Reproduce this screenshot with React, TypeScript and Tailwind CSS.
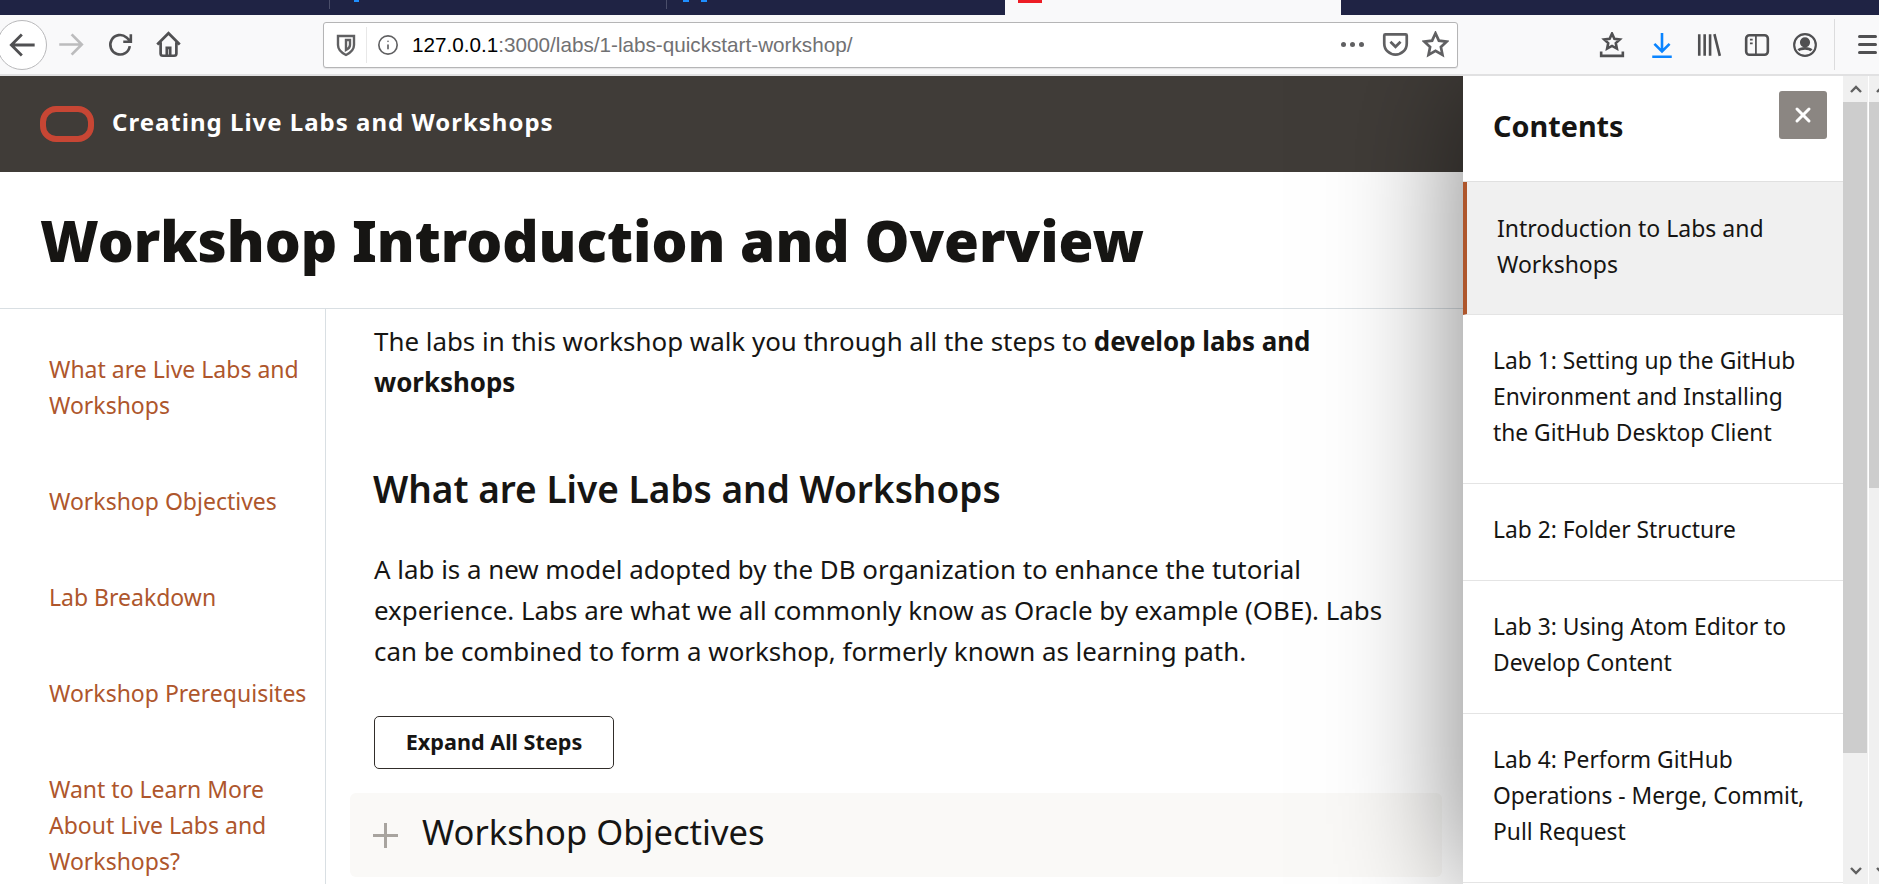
import { Info, X } from "lucide-react";

const sans = "font-['Noto_Sans','Open_Sans',sans-serif]";

const sections = [
  ["What are Live Labs and", "Workshops"],
  ["Workshop Objectives"],
  ["Lab Breakdown"],
  ["Workshop Prerequisites"],
  ["Want to Learn More", "About Live Labs and", "Workshops?"],
];

const labs = [
  { lines: ["Lab 1: Setting up the GitHub", "Environment and Installing", "the GitHub Desktop Client"] },
  { lines: ["Lab 2: Folder Structure"] },
  { lines: ["Lab 3: Using Atom Editor to", "Develop Content"] },
  { lines: ["Lab 4: Perform GitHub", "Operations - Merge, Commit,", "Pull Request"] },
];

function TabStrip() {
  return (
    <div className="flex h-[15px] shrink-0 bg-[#1f2344]">
      <div className="w-[329px] shrink-0" />
      <div className="flex h-[9px] w-[337px] shrink-0 border-l border-[#4a4e6a] pl-6">
        <div className="h-[2px] w-[5px] bg-[#1f8fff]" />
      </div>
      <div className="flex h-[9px] w-[339px] shrink-0 gap-3 border-l border-[#4a4e6a] pl-4">
        <div className="h-[2px] w-[6px] bg-[#1f8fff]" />
        <div className="h-[2px] w-[6px] bg-[#1f8fff]" />
      </div>
      <div className="w-[336px] shrink-0 bg-[#f9f9fa] pl-[13px]">
        <div className="h-[3px] w-[24px] bg-[#ed1c24]" />
      </div>
    </div>
  );
}

function ToolIcon({ className, children }: { className?: string; children: React.ReactNode }) {
  return (
    <svg viewBox="0 0 24 24" fill="none" stroke="currentColor" strokeWidth={2.4} className={className}>
      {children}
    </svg>
  );
}

function Toolbar() {
  return (
    <div className="flex h-[61px] shrink-0 items-center border-b-2 border-[#e1e1e2] bg-[#f9f9fa] text-[#505052]">
      <div className="ml-[-3px] flex h-[50px] w-[50px] shrink-0 items-center justify-center rounded-full border border-[#b9b9bb] bg-white">
        <ToolIcon className="ml-[2px] h-[28px] w-[28px]">
          <path d="M22 12H3M11 3l-9 9 9 9" />
        </ToolIcon>
      </div>
      <ToolIcon className="ml-[10px] h-[27px] w-[27px] text-[#bcbcbd]">
        <path d="M2 12h19M13 3l9 9-9 9" />
      </ToolIcon>
      <ToolIcon className="ml-[23px] h-[26px] w-[26px]">
        <path d="M21 13a9 9 0 1 1-3-8l3 3M22 2v7h-7" />
      </ToolIcon>
      <ToolIcon className="ml-[22px] h-[27px] w-[27px]">
        <path d="M2 12 12 2l10 10M5 10v10a2 2 0 0 0 2 2h10a2 2 0 0 0 2-2V10M10.500 22v-7h3v7" />
      </ToolIcon>

      <div className="ml-[141px] flex h-[46px] w-[1135px] shrink-0 items-center rounded-[3px] border border-[#b5b5b6] bg-white shadow-[0_1px_1px_rgba(0,0,0,0.08)]">
        <ToolIcon className="ml-[10px] h-[24px] w-[24px] text-[#606062]">
          <path d="M4 3h16v9c0 5-4 8-8 10-4-2-8-5-8-10zM12 7h4v5c0 2-2 4-4 5z" />
        </ToolIcon>
        <div className="ml-[8px] h-[36px] w-px bg-[#e8e8e8]" />
        <Info className="ml-[10px] h-[22px] w-[22px] text-[#606062]" strokeWidth={1.8} />
        <div className="ml-[13px] font-['Liberation_Sans',sans-serif] text-[20.700px] text-[#717173]">
          <span className="text-black">127.0.0.1</span>:3000/labs/1-labs-quickstart-workshop/
        </div>
        <div className="ml-auto flex items-center gap-[4px]">
          <span className="h-[5px] w-[5px] rounded-full bg-[#606062]" />
          <span className="h-[5px] w-[5px] rounded-full bg-[#606062]" />
          <span className="h-[5px] w-[5px] rounded-full bg-[#606062]" />
        </div>
        <ToolIcon className="ml-[18px] h-[27px] w-[27px] text-[#606062]">
          <path d="M3 3h18a1 1 0 0 1 1 1v7c0 6-5 10-10 10S2 17 2 11V4a1 1 0 0 1 1-1zM7.500 9.500 12 14l4.500-4.500" />
        </ToolIcon>
        <ToolIcon className="ml-[13px] mr-[8px] h-[27px] w-[27px] text-[#606062]">
          <path d="m12 2 3 6.600 7 .8-5.200 4.800 1.400 7L12 17.600l-6.200 3.600 1.400-7L2 9.400l7-.8z" />
        </ToolIcon>
      </div>

      <ToolIcon className="ml-[141px] h-[26px] w-[26px]">
        <path d="m12 1.500 2.200 4.800 5 .6-3.700 3.400 1 5L12 12.800l-4.500 2.500 1-5L4.800 6.900l5-.6zM2 18v4h20v-4" />
      </ToolIcon>
      <ToolIcon className="ml-[24px] h-[26px] w-[26px] text-[#0a84ff]">
        <path d="M12 1v17M5 11l7 7 7-7M3 23h18" />
      </ToolIcon>
      <ToolIcon className="ml-[21px] h-[26px] w-[26px]">
        <path d="M3 2v20M8 2v20M13 2v20M17 2l5 20" />
      </ToolIcon>
      <ToolIcon className="ml-[22px] h-[26px] w-[26px]">
        <rect x="2" y="3" width="20" height="18" rx="3" />
        <path d="M11 3v18M5.500 7H8M5.500 10.500H8" strokeWidth={1.6} />
      </ToolIcon>
      <ToolIcon className="ml-[22px] h-[26px] w-[26px]">
        <circle cx="12" cy="12" r="10" strokeWidth={2} />
        <circle cx="12" cy="9.500" r="3.500" fill="currentColor" />
        <path d="M6 17c2-2.500 10-2.500 12 0" strokeWidth={2.6} />
      </ToolIcon>
      <div className="ml-[16px] h-[51px] w-px bg-[#dcdcdd]" />
      <div className="ml-[23px] flex w-[19px] flex-col gap-[5px]">
        <span className="h-[3px] rounded-full bg-[#505052]" />
        <span className="h-[3px] rounded-full bg-[#505052]" />
        <span className="h-[3px] rounded-full bg-[#505052]" />
      </div>
    </div>
  );
}

function Page() {
  return (
    <div className={`h-full w-full overflow-hidden ${sans} text-[#161513]`}>
      <header className="flex h-[96px] items-center bg-[#403c38] pl-[40px]">
        <div className="h-[36px] w-[54px] rounded-[16px] border-[6px] border-[#c74634]" />
        <div className="mb-[4px] ml-[18px] text-[24px] font-bold tracking-[1px] text-white">
          Creating Live Labs and Workshops
        </div>
      </header>
      <div className="flex h-[137px] items-center border-b border-[#d9dfe3] pl-[40px]">
        <h1 className="text-[56.600px] font-black whitespace-nowrap">Workshop Introduction and Overview</h1>
      </div>
      <div className="flex h-[600px]">
        <nav className="flex w-[326px] shrink-0 flex-col gap-[60px] border-r border-[#d9dfe3] pt-[42px] pl-[49px] text-[23px] leading-[36px] text-[#ae562c]">
          {sections.map((lines) => (
            <a key={lines[0]} className="whitespace-nowrap">
              {lines.map((line) => (
                <div key={line}>{line}</div>
              ))}
            </a>
          ))}
        </nav>
        <main className="flex-1 pt-[12px] pl-[24px]">
          <div className="pl-[24px]">
            <p className="text-[25.900px] leading-[41px] whitespace-nowrap">
              The labs in this workshop walk you through all the steps to <b>develop labs and</b>
              <br />
              <b>workshops</b>
            </p>
            <h2 className="mt-[62px] ml-[-1px] text-[37px] leading-[48px] font-semibold">What are Live Labs and Workshops</h2>
            <p className="mt-[36px] text-[25.900px] leading-[41px] whitespace-nowrap">
              A lab is a new model adopted by the DB organization to enhance the tutorial
              <br />
              experience. Labs are what we all commonly know as Oracle by example (OBE). Labs
              <br />
              can be combined to form a workshop, formerly known as learning path.
            </p>
            <button className="mt-[44px] block h-[53px] w-[240px] rounded-[5px] border border-[#312d2a] text-[21.600px] font-bold">
              Expand All Steps
            </button>
          </div>
          <div className="mt-[24px] flex h-[84px] w-[1092px] items-center rounded-[6px] bg-[#faf9f7] pl-[23px]">
            <div className="relative h-[25px] w-[25px]">
              <div className="absolute top-[11px] left-0 h-[3px] w-[25px] bg-[#a8a49f]" />
              <div className="absolute top-0 left-[11px] h-[25px] w-[3px] bg-[#a8a49f]" />
            </div>
            <div className="mb-[7px] ml-[24px] text-[34.600px]">Workshop Objectives</div>
          </div>
        </main>
      </div>
    </div>
  );
}

function ScrollStrip({ thumb }: { thumb: string }) {
  return (
    <div className="flex h-full w-[25px] shrink-0 flex-col bg-[#f0f0f0]">
      <div className="flex h-[26px] shrink-0 items-center pl-[7px] text-[#606060]">
        <svg viewBox="0 0 12 10" className="h-[10px] w-[12px]" fill="none" stroke="currentColor" strokeWidth={2.4}>
          <path d="M1 8 6 3l5 5" />
        </svg>
      </div>
      <div className={`mr-px shrink-0 bg-[#cdcdcd] ${thumb}`} />
      <div className="mt-auto flex h-[26px] shrink-0 items-center pl-[7px] text-[#606060]">
        <svg viewBox="0 0 12 10" className="h-[10px] w-[12px]" fill="none" stroke="currentColor" strokeWidth={2.4}>
          <path d="m1 2 5 5 5-5" />
        </svg>
      </div>
    </div>
  );
}

function Drawer() {
  return (
    <aside className={`absolute top-0 right-0 bottom-0 flex ${sans} text-[#161513]`}>
      <div className="w-[380px] overflow-hidden bg-white shadow-[0_0_120px_rgba(0,0,0,0.5)]">
        <div className="flex h-[106px] border-b border-[#e0e0e0] pl-[30px]">
          <h3 className="mt-[31px] text-[28.800px] leading-[38px] font-bold">Contents</h3>
          <button className="mt-[15px] mr-[16px] ml-auto flex h-[48px] w-[48px] items-center justify-center rounded-[3px] bg-[#8b8682] text-white">
            <X className="h-[24px] w-[24px]" strokeWidth={3} />
          </button>
        </div>
        <div className="border-b border-[#e4e4e4] border-l-4 border-l-[#ae562c] bg-[#f0f0f0] pt-[28px] pb-[32px] pl-[30px] text-[23px] leading-[36px]">
          <div>Introduction to Labs and</div>
          <div>Workshops</div>
        </div>
        {labs.map((lab) => (
          <div key={lab.lines[0]} className="border-b border-[#e4e4e4] pt-[28px] pb-[32px] pl-[30px] text-[22.800px] leading-[36px] whitespace-nowrap">
            {lab.lines.map((line) => (
              <div key={line}>{line}</div>
            ))}
          </div>
        ))}
      </div>
      <ScrollStrip thumb="h-[651px]" />
    </aside>
  );
}

export default function App() {
  return (
    <div className="flex h-[884px] w-[1879px] flex-col overflow-hidden bg-white">
      <TabStrip />
      <Toolbar />
      <div className="flex min-h-0 flex-1">
        <div className="relative w-[1868px] shrink-0 overflow-hidden">
          <Page />
          <Drawer />
        </div>
        <div className="ml-px w-[10px] overflow-hidden">
          <ScrollStrip thumb="h-[386px]" />
        </div>
      </div>
    </div>
  );
}
